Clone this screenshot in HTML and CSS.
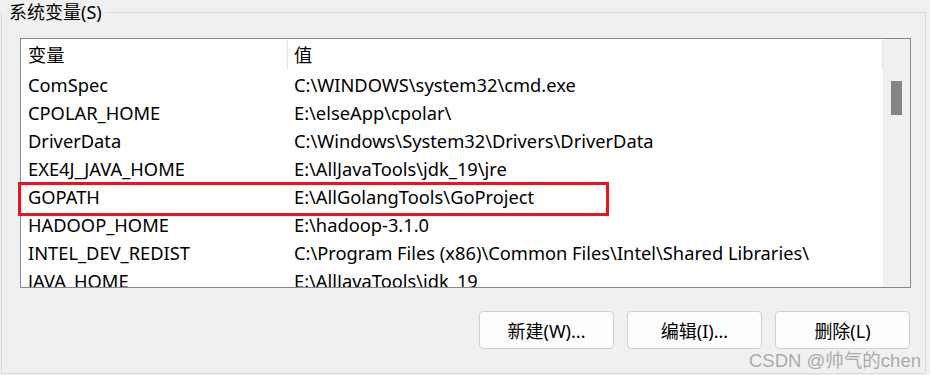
FILE: index.html
```html
<!DOCTYPE html>
<html lang="zh-CN">
<head>
  <meta charset="UTF-8" />
  <meta name="viewport" content="width=device-width, initial-scale=1.0">
  <title>系统变量</title>
  <link rel="stylesheet" href="styles.css">
</head>
<body>
  <fieldset class="group">
    <legend>系统变量(S)</legend>

    <div class="list">
      <div class="list-body">
        <div class="head-cell">变量</div>
        <div class="head-cell value">值</div>

        <div class="cell">ComSpec</div>
        <div class="cell value">C:\WINDOWS\system32\cmd.exe</div>
        <div class="cell">CPOLAR_HOME</div>
        <div class="cell value">E:\elseApp\cpolar\</div>
        <div class="cell">DriverData</div>
        <div class="cell value">C:\Windows\System32\Drivers\DriverData</div>
        <div class="cell">EXE4J_JAVA_HOME</div>
        <div class="cell value">E:\AllJavaTools\jdk_19\jre</div>
        <div class="cell">GOPATH</div>
        <div class="cell value">E:\AllGolangTools\GoProject</div>
        <div class="cell">HADOOP_HOME</div>
        <div class="cell value">E:\hadoop-3.1.0</div>
        <div class="cell">INTEL_DEV_REDIST</div>
        <div class="cell value">C:\Program Files (x86)\Common Files\Intel\Shared Libraries\</div>
        <div class="cell">JAVA_HOME</div>
        <div class="cell value">E:\AllJavaTools\jdk_19</div>
      </div>
      <div class="scrollbar"><div class="thumb"></div></div>

      <!-- 标注框 -->
      <div class="mark"></div>
    </div>

    <div class="actions">
      <button class="btn">新建(W)...</button>
      <button class="btn">编辑(I)...</button>
      <button class="btn">删除(L)</button>
    </div>
  </fieldset>

  <div class="watermark">CSDN @帅气的chen</div>
</body>
</html>
```

FILE: styles.css
```css
body {
  margin: 0;
  width: 930px;
  height: 375px;
  overflow: hidden;
  background-color: #f0f0f0;
  font-family: 'Noto Sans', 'Noto Sans CJK SC', sans-serif;
  font-size: 18.3px;
  color: #000;
  position: relative;
}

.group {
  box-sizing: border-box;
  height: 374px;
  margin: 0 4px 0 1px;
  padding: 0;
  border: 1px solid #dadada;
}

.group legend {
  padding: 0 4px 0 7px;
  line-height: 24px;
  font-size: 18px;
}

.list {
  position: relative;
  display: flex;
  height: 250px;
  margin: 14px 14px 0 18px;
  background: white;
  border: 1px solid #828790;
  box-sizing: border-box;
}

.list-body {
  width: 862px;
  height: 248px;
  overflow: hidden;
  display: grid;
  grid-template-columns: 266px 596px;
  grid-auto-rows: 28px;
  grid-template-rows: 32px;
  align-content: start;
}

.head-cell {
  height: 30px;
  margin-top: 1px;
  line-height: 30px;
  padding-left: 7px;
  white-space: nowrap;
}

.head-cell.value {
  border-left: 1px solid #e5e5e5;
  border-right: 1px solid #e5e5e5;
  padding-left: 6px;
}

.cell {
  line-height: 28px;
  padding-left: 7px;
  white-space: nowrap;
}

.scrollbar {
  width: 27px;
  background: #f0f0f0;
  padding: 42px 0 0 8px;
  box-sizing: border-box;
}

.thumb {
  width: 11px;
  height: 34px;
  background: #858585;
}

.mark {
  position: absolute;
  left: -3px;
  top: 143px;
  width: 591px;
  height: 34px;
  border: 3px solid #e8141e;
  box-sizing: border-box;
}

.actions {
  display: flex;
  justify-content: flex-end;
  gap: 13px;
  margin-top: 23px;
  padding-right: 15px;
}

.btn {
  width: 135px;
  height: 38px;
  background: #fdfdfd;
  border: 1px solid #d0d0d0;
  border-radius: 4px;
  font-family: inherit;
  font-size: 18px;
  color: #000;
  padding: 0;
}

.watermark {
  position: absolute;
  left: 749px;
  top: 346px;
  font-family: 'Liberation Sans', 'Noto Sans CJK SC', sans-serif;
  font-size: 18.5px;
  color: #ababab;
  white-space: nowrap;
}
```
